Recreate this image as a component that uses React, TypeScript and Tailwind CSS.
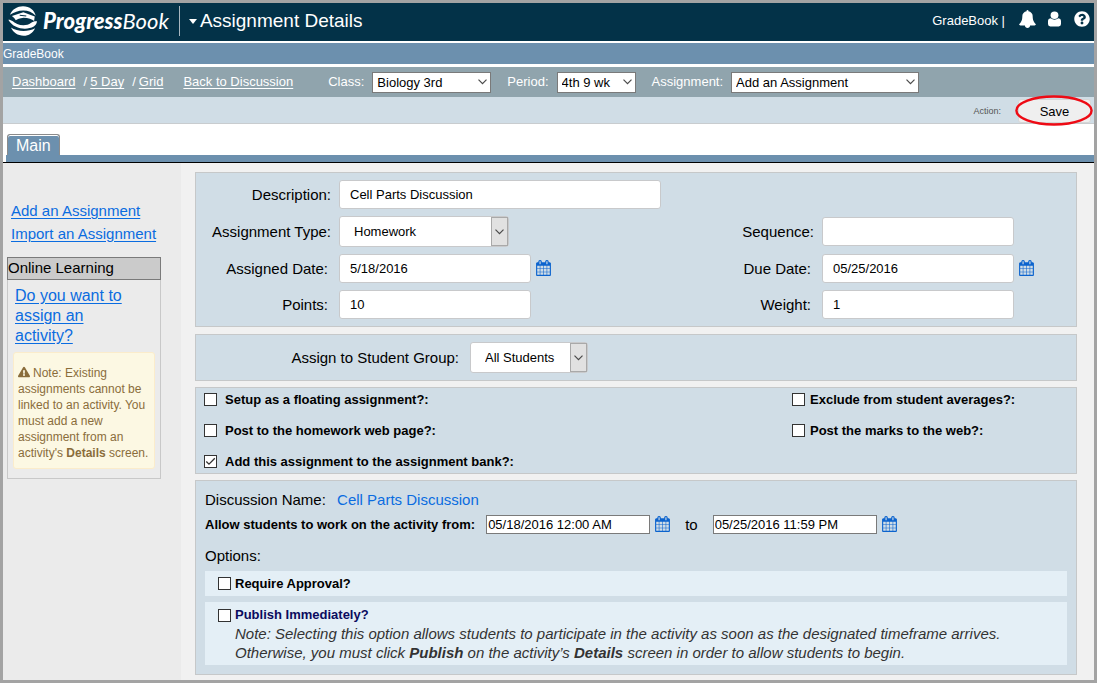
import { ReactNode } from "react";
import { FaExclamationTriangle, FaQuestionCircle } from "react-icons/fa";

const panel = "border border-[#c6c8c9] bg-[#d0dde6]";
const field =
  "h-[29px] rounded-[3px] border border-[#c8c9cb] bg-white px-[10px] text-[13px] text-black outline-none";

function Chevron({ className = "" }: { className?: string }) {
  return (
    <svg viewBox="0 0 9 6" className={`h-[6px] w-[9px] ${className}`} fill="none" stroke="#4a4a4a" strokeWidth="1.2" aria-hidden="true">
      <path d="M0.5 0.7 4.5 4.7 8.5 0.7" />
    </svg>
  );
}

function CalendarButton({ label }: { label: string }) {
  return (
    <button type="button" aria-label={label} className="ml-[5px] flex shrink-0 pb-[2px]">
      <svg viewBox="0 0 1664 1792" className="h-[16px] w-[15px]" fill="#0b63ce" aria-hidden="true">
        <path d="M128 1664h288v-288h-288v288zm352 0h320v-288h-320v288zm-352-352h288v-320h-288v320zm352 0h320v-320h-320v320zm-352-384h288v-288h-288v288zm736 736h320v-288h-320v288zm-384-736h320v-288h-320v288zm768 736h288v-288h-288v288zm-384-352h320v-320h-320v320zm-352-864v-288q0-13-9.5-22.5t-22.5-9.5h-64q-13 0-22.5 9.5t-9.5 22.5v288q0 13 9.5 22.5t22.5 9.5h64q13 0 22.5-9.5t9.5-22.5zm736 864h288v-320h-288v320zm-384-384h320v-288h-320v288zm384 0h288v-288h-288v288zm32-480v-288q0-13-9.5-22.5t-22.5-9.5h-64q-13 0-22.5 9.5t-9.5 22.5v288q0 13 9.5 22.5t22.5 9.5h64q13 0 22.5-9.5t9.5-22.5zm384-64v1280q0 52-38 90t-90 38h-1408q-52 0-90-38t-38-90v-1280q0-52 38-90t90-38h128v-96q0-66 47-113t113-47h64q66 0 113 47t47 113v96h384v-96q0-66 47-113t113-47h64q66 0 113 47t47 113v96h128q52 0 90 38t38 90z" />
      </svg>
    </button>
  );
}

function ToolbarSelect({ id, label, value, width }: { id: string; label: string; value: string; width: string }) {
  return (
    <div className="flex items-center gap-2">
      <label htmlFor={id} className="text-white">
        {label}
      </label>
      <div className={`relative flex items-center ${width}`}>
        <select id={id} className="h-[21px] w-full appearance-none border border-[#7a7a7a] bg-white pr-4 pl-1 text-[13px] text-black outline-none">
          <option>{value}</option>
        </select>
        <Chevron className="pointer-events-none absolute right-1" />
      </div>
    </div>
  );
}

function FormSelect({ id, value, width }: { id: string; value: string; width: string }) {
  return (
    <div className={`relative flex ${width}`}>
      <select id={id} className="h-[31px] w-full appearance-none rounded-[3px] border border-[#c8c9cb] bg-white pr-5 pl-[14px] text-[13px] text-black outline-none">
        <option>{value}</option>
      </select>
      <span className="pointer-events-none absolute inset-y-px right-px flex w-[17px] items-center justify-center border border-[#a9a9a9] bg-[#e1e1e1]">
        <Chevron />
      </span>
    </div>
  );
}

function Check({ id, children, checked = false, gap = "gap-2", color = "text-black" }: { id: string; children: ReactNode; checked?: boolean; gap?: string; color?: string }) {
  return (
    <div className={`flex items-center ${gap}`}>
      <span className="grid shrink-0">
        <input id={id} type="checkbox" defaultChecked={checked} className="peer col-start-1 row-start-1 size-[13px] appearance-none border border-[#333] bg-white" />
        <svg viewBox="0 0 13 13" className="pointer-events-none col-start-1 row-start-1 size-[13px] opacity-0 peer-checked:opacity-100" fill="none" stroke="#333" strokeWidth="1.3" aria-hidden="true">
          <path d="M2.3 6.5 5 9.2 10.8 3.3" />
        </svg>
      </span>
      <label htmlFor={id} className={`text-[13px] font-bold ${color}`}>
        {children}
      </label>
    </div>
  );
}

function Logo() {
  return (
    <a href="#home" className="flex items-center text-white">
      <svg viewBox="24 16 92 92" className="size-[30px]" fill="#fff" aria-hidden="true">
        <path d="M30 43C37 26 53 17 70 17C91 17 105 29 109 46C99 35 86 30 71 30C55 30 44 36 30 43Z" />
        <path d="M36 47L71 35L106 48L104 62C98 56 86 52 72 52Q54 54 48 60Q44 52 36 47Z" />
        <path d="M25 58C36 58 42 66 52 71C66 77 84 76 94 68C100 64 106 62 113 63C112 71 108 76 103 79C82 91 42 88 25 58Z" />
        <path d="M33 82C52 95 86 96 107 84C100 99 88 107 72 107C54 107 40 98 33 82Z" />
        <path d="M60 44.500L80 46.500" stroke="#033248" strokeWidth="3.500" />
      </svg>
      <span className="ml-[5px] font-[Lato,sans-serif] text-[22px] leading-[26px] italic">
        <b className="font-black">Progress</b>Book
      </span>
    </a>
  );
}

const label = "text-right text-[15px] leading-5 text-black";

export default function App() {
  return (
    <div className="flex min-h-screen flex-col border-[3px] border-[#a3a3a3] bg-white font-['Liberation_Sans',Arial,sans-serif] text-black">
      <header className="flex h-[38px] items-center bg-[#033248] pr-1 pb-[2px] pl-[5px] text-white">
        <Logo />
        <div className="ml-[10px] h-[30px] w-px bg-[#a9b7c0]" />
        <button type="button" className="ml-[9px] flex items-center gap-[3px]">
          <svg viewBox="0 0 8 5" className="h-[5px] w-[8px]" fill="#fff" aria-hidden="true">
            <path d="M0 0h8L4 5Z" />
          </svg>
          <h1 className="text-[19px] leading-6">Assignment Details</h1>
        </button>
        <div className="ml-auto flex items-center">
          <span className="mr-[14px] text-[13px]">GradeBook |</span>
          <div className="flex items-center pb-1">
            <button type="button" aria-label="Notifications">
              <svg viewBox="64 0 1664 1792" className="h-[18px] w-[17px]" fill="#fff" aria-hidden="true">
                <path d="M1728 1408q0 52-38 90t-90 38h-448q0 106-75 181t-181 75-181-75-75-181h-448q-52 0-90-38t-38-90q50-42 91-88t85-119.5 74.5-158.5 50-206 19.5-260q0-152 117-282.5t307-158.5q-8-19-8-39 0-40 28-68t68-28 68 28 28 68q0 20-8 39 190 28 307 158.5t117 282.5q0 139 19.5 260t50 206 74.5 158.5 85 119.5 91 88z" />
              </svg>
            </button>
            <button type="button" aria-label="Account" className="ml-3">
              <svg viewBox="0 0 14 16" className="h-[16px] w-[13px]" fill="#fff" aria-hidden="true">
                <ellipse cx="7" cy="4" rx="4.200" ry="4" />
                <path d="M0 10Q0 7.500 2.800 7.300Q7 10.400 11.200 7.300Q14 7.500 14 10V13.500Q14 16 11.500 16H2.500Q0 16 0 13.500Z" />
              </svg>
            </button>
            <button type="button" aria-label="Help" className="ml-[13px]">
              <FaQuestionCircle className="size-[16px]" />
            </button>
          </div>
        </div>
      </header>

      <div className="mt-[2px] h-[21px] bg-[#6c90ae] text-[12px] leading-[22px] text-white">GradeBook</div>

      <nav className="mt-[3px] flex h-[30px] items-center bg-[#90a4ad] pl-[9px] text-[13px] text-white">
        <a href="#dashboard" className="underline underline-offset-2">Dashboard</a>
        <span className="mr-[3px] ml-2">/</span>
        <a href="#day" className="underline underline-offset-2">5 Day</a>
        <span className="mr-[3px] ml-2">/</span>
        <a href="#grid" className="underline underline-offset-2">Grid</a>
        <a href="#discussion" className="ml-5 underline underline-offset-2">Back to Discussion</a>
        <div className="ml-[35px] flex items-center gap-4">
          <ToolbarSelect id="class" label="Class:" value="Biology 3rd" width="w-[119px]" />
          <ToolbarSelect id="period" label="Period:" value="4th 9 wk" width="w-[79px]" />
          <ToolbarSelect id="assignment" label="Assignment:" value="Add an Assignment" width="w-[188px]" />
        </div>
      </nav>

      <div className="flex h-[27px] items-end justify-end border-b border-[#c8cccf] bg-[#d0dde6] pr-[3px]">
        <span className="mr-[17px] text-[9px] leading-6 text-[#555]">Action:</span>
        <div className="relative">
          <button type="button" className="block h-[24px] w-[73px] rounded-[3px] border border-[#d6d6d6] bg-[#efefef] pt-px text-[13px]">
            Save
          </button>
          <svg viewBox="0 0 78 31" className="pointer-events-none absolute -top-[4px] -left-[3px] h-[31px] w-[78px]" fill="none" stroke="#ee0a14" strokeWidth="2.4" aria-hidden="true">
            <ellipse cx="39" cy="15.5" rx="37.6" ry="14" />
          </svg>
        </div>
      </div>

      <div className="flex h-[31px] items-end pl-1">
        <button type="button" className="h-[21px] rounded-t-[3px] border border-b-0 border-[#8b8b8b] bg-[#6c90ae] px-2 text-[16px] leading-[22px] text-white shadow-[inset_0_1px_0_#fff]">
          Main
        </button>
      </div>
      <div className="ml-[3px] h-[7px] bg-[#6c90ae]" />

      <div className="flex flex-1 border-t border-black bg-[#f1f1f1]">
        <aside className="w-[178px] shrink-0 bg-[#ebebeb] pt-[36px] pl-1">
          <div className="flex flex-col items-start pl-1 text-[15px] leading-[23px] text-[#0a6ce0]">
            <a href="#add" className="underline underline-offset-2">Add an Assignment</a>
            <a href="#import" className="underline underline-offset-2">Import an Assignment</a>
          </div>
          <section className="mt-3 w-[154px] border border-[#c8c8c8]">
            <h2 className="-mx-px -mt-px h-[23px] border border-[#7a7a7a] bg-[#cbcbcb] text-[15px] leading-5">Online Learning</h2>
            <a href="#activity" className="mt-[6px] ml-[7px] block w-[120px] text-[16px] leading-5 text-[#0a6ce0] underline underline-offset-2">
              Do you want to assign an activity?
            </a>
            <p className="mx-[5px] mt-[6px] mb-[9px] rounded-[3px] border border-[#fbeccb] bg-[#fcf8e3] pt-3 pr-1 pb-[7px] pl-1 text-[12px] leading-4 text-[#8a6d3b]">
              <FaExclamationTriangle className="mr-[3px] inline size-[12px] align-[-1px]" />
              Note: Existing assignments cannot be linked to an activity. You must add a new assignment from an activity's <b>Details</b> screen.
            </p>
          </section>
        </aside>

        <main className="flex min-w-0 flex-1 flex-col gap-[6px] pt-[9px] pr-[17px] pb-[5px] pl-[14px]">
          <section className={`${panel} mb-px grid grid-cols-[135px_1fr_87px_254px] items-center gap-x-2 gap-y-[7px] py-[7px]`}>
            <label htmlFor="description" className={label}>Description:</label>
            <input id="description" defaultValue="Cell Parts Discussion" className={`${field} col-span-3 w-[322px]`} />

            <label htmlFor="type" className={label}>Assignment Type:</label>
            <FormSelect id="type" value="Homework" width="w-[170px]" />
            <label htmlFor="sequence" className={label}>Sequence:</label>
            <input id="sequence" className={`${field} w-[192px]`} />

            <label htmlFor="assigned" className={`${label} pr-[3px]`}>Assigned Date:</label>
            <div className="flex items-center">
              <input id="assigned" defaultValue="5/18/2016" className={`${field} w-[192px]`} />
              <CalendarButton label="Pick assigned date" />
            </div>
            <label htmlFor="due" className={`${label} pr-[3px]`}>Due Date:</label>
            <div className="flex items-center">
              <input id="due" defaultValue="05/25/2016" className={`${field} w-[192px]`} />
              <CalendarButton label="Pick due date" />
            </div>

            <label htmlFor="points" className={`${label} pr-[3px]`}>Points:</label>
            <input id="points" defaultValue="10" className={`${field} w-[192px]`} />
            <label htmlFor="weight" className={`${label} pr-[3px]`}>Weight:</label>
            <input id="weight" defaultValue="1" className={`${field} w-[192px]`} />
          </section>

          <section className={`${panel} flex items-center gap-[11px] py-[7px]`}>
            <label htmlFor="group" className={`${label} w-[263px]`}>Assign to Student Group:</label>
            <FormSelect id="group" value="All Students" width="w-[118px]" />
          </section>

          <section className={`${panel} grid grid-cols-[1fr_284px] auto-rows-[23px] items-center gap-y-2 pl-2`}>
            <Check id="floating">Setup as a floating assignment?:</Check>
            <Check id="exclude" gap="gap-[5px]">Exclude from student averages?:</Check>
            <Check id="homework">Post to the homework web page?:</Check>
            <Check id="marks" gap="gap-[5px]">Post the marks to the web?:</Check>
            <Check id="bank" checked>Add this assignment to the assignment bank?:</Check>
          </section>

          <section className={`${panel} flex-1 p-[9px]`}>
            <div className="text-[15px] leading-5">
              Discussion Name: <a href="#cell-parts" className="ml-[7px] text-[#0a6ce0]">Cell Parts Discussion</a>
            </div>
            <div className="mt-[5px] flex h-[19px] items-center">
              <label htmlFor="from" className="text-[13px] font-bold">Allow students to work on the activity from:</label>
              <input id="from" defaultValue="05/18/2016 12:00 AM" className="ml-[11px] h-[19px] w-[164px] border border-[#7a7a7a] bg-white px-px text-[13px] outline-none" />
              <CalendarButton label="Pick start" />
              <label htmlFor="to" className="mx-[15px] text-[15px] leading-5">to</label>
              <input id="to" defaultValue="05/25/2016 11:59 PM" className="h-[19px] w-[164px] border border-[#7a7a7a] bg-white px-px text-[13px] outline-none" />
              <CalendarButton label="Pick end" />
            </div>
            <h3 className="mt-3 text-[15px] leading-5">Options:</h3>
            <div className="mt-[5px] flex h-[25px] items-center bg-[#e4eff6] pl-[13px]">
              <Check id="approval" gap="gap-1">Require Approval?</Check>
            </div>
            <div className="mt-[6px] bg-[#e4eff6] pt-1 pb-[3px] pl-[13px]">
              <Check id="publish" gap="gap-1" color="text-[#0b0b5e] leading-[18px]">Publish Immediately?</Check>
              <p className="pl-[17px] text-[15px] leading-[19px] text-[#333] italic">
                Note: Selecting this option allows students to participate in the activity as soon as the designated timeframe arrives.
                <br />
                Otherwise, you must click <b>Publish</b> on the activity’s <b>Details</b> screen in order to allow students to begin.
              </p>
            </div>
          </section>
        </main>
      </div>
    </div>
  );
}
